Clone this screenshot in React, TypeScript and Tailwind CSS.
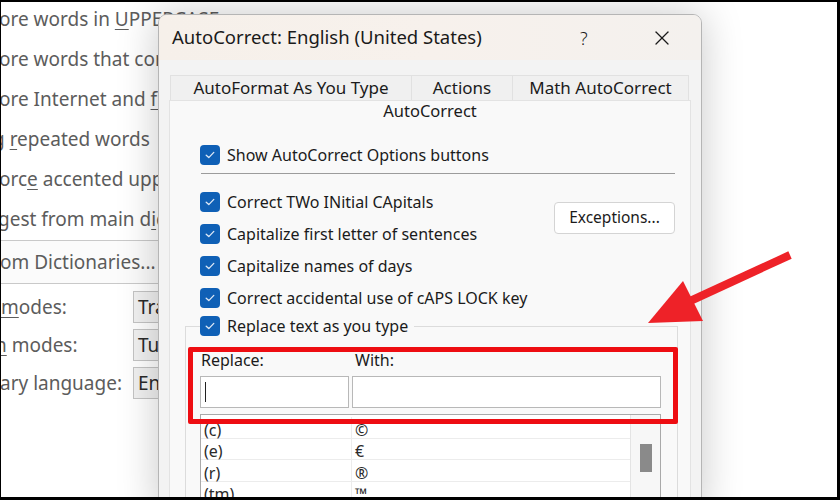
import React from "react";
import { X } from "lucide-react";

const font = { fontFamily: '"Noto Sans", "Open Sans", Arial, sans-serif' };

function Check({ label }: { label: string }) {
  return (
    <div className="flex items-center gap-[7px]">
      <div className="w-[20px] h-[20px] rounded-[4px] bg-[#0f60b6] flex items-center justify-center">
        <svg width="12" height="12" viewBox="0 0 12 12">
          <path d="M2.2 6.2 L4.8 8.6 L9.8 3.4" fill="none" stroke="#dfe9f6" strokeWidth="1.3" strokeLinecap="round" strokeLinejoin="round" />
        </svg>
      </div>
      <span className="text-[16px] text-[#1b1b1b] leading-none">{label}</span>
    </div>
  );
}

function U({ children }: { children: React.ReactNode }) {
  return <span className="underline underline-offset-[3px] decoration-[1px]">{children}</span>;
}

export default function App() {
  const rows: [string, string][] = [
    ["(c)", "©"],
    ["(e)", "€"],
    ["(r)", "®"],
    ["(tm)", "™"],
  ];
  return (
    <div className="w-[840px] h-[500px] bg-black pt-[2px] pr-[3px] pb-[3px] pl-[1px]" style={font}>
      <div className="relative w-full h-full overflow-hidden bg-white">
        {/* background options page */}
        <div className="flex flex-col -mt-[3px] text-[19px] text-[#5c5c5c]">
          <div className="h-[40px] flex items-center whitespace-nowrap -ml-[2px]"><span>ore words in <U>U</U>PPERCASE</span></div>
          <div className="h-[40px] flex items-center whitespace-nowrap -ml-[2px]"><span>ore words that contain numbers</span></div>
          <div className="h-[40px] flex items-center whitespace-nowrap -ml-[2px]"><span>ore Internet and <U>f</U>ile addresses</span></div>
          <div className="h-[40px] flex items-center whitespace-nowrap -ml-[8px]"><span>g <U>r</U>epeated words</span></div>
          <div className="h-[40px] flex items-center whitespace-nowrap -ml-[2px]"><span>orc<U>e</U> accented uppercase in French</span></div>
          <div className="h-[40px] flex items-center whitespace-nowrap -ml-[3px]"><span>gest from main d<U>i</U>ctionary only</span></div>
          <div className="mt-[1px] h-[44px] w-[160px] border-y border-r border-[#c9c9c9] bg-[#fbfbfb] flex items-center whitespace-nowrap">
            <span className="-ml-[1px]">om Dictionaries...</span>
          </div>
          <div className="mt-[7px] flex flex-col gap-[6px]">
            <div className="flex items-center h-[32px]">
              <div className="w-[132px] whitespace-nowrap"><U>m</U>odes:</div>
              <div className="h-[32px] w-[60px] border border-[#c4c4c4] bg-[#f1f1f1] flex items-center pl-[4px] text-[#2a2a2a]">Traditional</div>
            </div>
            <div className="flex items-center h-[32px]">
              <div className="w-[132px] whitespace-nowrap -ml-[6px]"><span><U>n</U> modes:</span></div>
              <div className="h-[32px] w-[60px] border border-[#c4c4c4] bg-[#f1f1f1] flex items-center pl-[4px] text-[#2a2a2a] ml-[6px]">Tuteo</div>
            </div>
            <div className="flex items-center h-[32px]">
              <div className="w-[132px] whitespace-nowrap -ml-[1px]">ary language:</div>
              <div className="h-[32px] w-[60px] border border-[#c4c4c4] bg-[#f1f1f1] flex items-center pl-[4px] text-[#2a2a2a] ml-[1px]">English</div>
            </div>
          </div>
        </div>

        {/* dialog window */}
        <div className="absolute left-[157px] top-[12px] w-[544px] h-[500px] rounded-t-[9px] border border-[#b5b5b5] bg-[#f3f3f3] shadow-[0_0_40px_rgba(0,0,0,0.22)] flex flex-col overflow-hidden">
          <div className="h-[45px] shrink-0 flex items-center bg-gradient-to-r from-[#f6f0ea] via-[#f7f1ec] to-[#f4f1ee] pl-[13px] text-[#1a1a1a]">
            <span className="text-[18.5px] leading-none">AutoCorrect: English (United States)</span>
            <span className="ml-auto text-[18px] leading-none font-light w-[14px]">?</span>
            <span className="ml-[56px] mr-[27px] text-[#1a1a1a]"><X size={24} strokeWidth={1.3} /></span>
          </div>
          <div className="mt-[15px] ml-[11px] w-[519px] h-[25px] flex text-[17px] text-[#1b1b1b]">
            <div className="w-[241px] border-t border-l border-[#e1e1e1] bg-[#f0f0f0] flex items-center justify-center">AutoFormat As You Type</div>
            <div className="w-[101px] border-t border-l border-[#e1e1e1] bg-[#f0f0f0] flex items-center justify-center">Actions</div>
            <div className="w-[177px] border-t border-x border-[#e1e1e1] bg-[#f0f0f0] flex items-center justify-center">Math AutoCorrect</div>
          </div>
          <div className="ml-[10px] w-[522px] flex-1 border border-[#e3e3e3] bg-[#f9f9f9] flex flex-col">
            <div className="h-[21px] flex items-center justify-center text-[16.5px] text-[#1b1b1b]">AutoCorrect</div>
            <div className="pl-[30px] pt-[17px]">
              <div className="h-[32px] flex items-center"><Check label="Show AutoCorrect Options buttons" /></div>
              <div className="mt-[2px] ml-[1px] mr-[15px] h-px bg-[#9c9c9c]" />
              <div className="mt-[12px] flex items-center pr-[15px]">
                <div className="flex flex-col">
                  <div className="h-[32px] flex items-center"><Check label="Correct TWo INitial CApitals" /></div>
                  <div className="h-[32px] flex items-center"><Check label="Capitalize first letter of sentences" /></div>
                </div>
                <div className="ml-auto w-[121px] h-[32px] rounded-[4px] border border-[#d4d4d4] bg-white flex items-center justify-center text-[15.5px] text-[#1b1b1b]">Exceptions...</div>
              </div>
              <div className="h-[32px] flex items-center"><Check label="Capitalize names of days" /></div>
              <div className="h-[32px] flex items-center"><Check label="Correct accidental use of cAPS LOCK key" /></div>
            </div>
            <fieldset className="ml-[15px] mr-[12px] border border-[#dcdcdc] px-[14px] pb-[20px] mt-0">
              <legend className="h-[24px] flex items-center pr-[6px] pl-0"><Check label="Replace text as you type" /></legend>
              <div className="pt-[11px] h-[33px] flex items-center text-[16px] text-[#1b1b1b]">
                <span className="w-[155px] pl-px">Replace:</span>
                <span>With:</span>
              </div>
              <div className="mt-[5px] flex gap-[3px]">
                <div className="w-[149px] h-[32px] border border-[#b8b8b8] bg-white flex items-center pl-[4px]">
                  <div className="w-px h-[20px] bg-[#222]" />
                </div>
                <div className="w-[309px] h-[32px] border border-[#b8b8b8] bg-white" />
              </div>
              <div className="mt-[6px] w-[461px] h-[120px] border border-[#a9a9a9] bg-white flex">
                <div className="flex-1 flex flex-col pt-[2px]">
                  {rows.map(([a, b]) => (
                    <div key={a} className="h-[21.5px] flex border-b border-[#ececec] text-[16px] text-[#2a2a2a] leading-none">
                      <div className="w-[151px] border-r border-[#ececec] pl-[3px] pt-[5px] flex items-center">{a}</div>
                      <div className="pl-[3px] pt-[5px] flex items-center">{b}</div>
                    </div>
                  ))}
                </div>
                <div className="w-[30px] border-l border-[#e4e4e4] bg-[#f7f7f7] flex justify-center pt-[29px]">
                  <div className="w-[12px] h-[28px] bg-[#8a8a8a]" />
                </div>
              </div>
            </fieldset>
          </div>
        </div>

        {/* red highlight box */}
        <div className="absolute left-[187px] top-[345px] w-[490px] h-[77px] border-[5px] border-[#ee0d12] rounded-[2px]" />

        {/* red arrow */}
        <svg className="absolute left-[-1px] top-[-2px]" width="840" height="500" viewBox="0 0 840 500">
          <line x1="790" y1="255" x2="688" y2="302" stroke="#ee2228" strokeWidth="8" />
          <polygon points="648,323 683,281 703,321" fill="#ee2228" />
        </svg>
      </div>
    </div>
  );
}
